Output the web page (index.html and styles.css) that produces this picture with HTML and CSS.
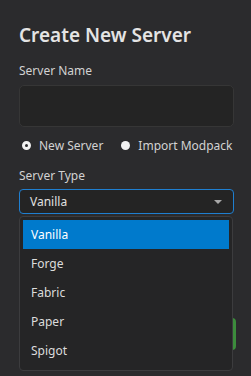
FILE: index.html
```html
<!DOCTYPE html>
<html lang="en">

<head>
  <meta charset="UTF-8" />
  <meta name="viewport" content="width=device-width, initial-scale=1.0" />
  <title>Create New Server</title>
  <link rel="stylesheet" href="styles.css">
</head>

<body>
  <div class="panel">
    <h1 class="titulo">Create New Server</h1>

    <label class="etiqueta" for="nombre">Server Name</label>
    <div class="campo" id="nombre"></div>

    <div class="radio-fila">
      <div class="radio-option">
        <span class="radio marcado"></span>
        <span>New Server</span>
      </div>
      <div class="radio-option">
        <span class="radio"></span>
        <span>Import Modpack</span>
      </div>
    </div>

    <div class="etiqueta corta">Server Type</div>
    <div class="selector-caja">
      <div class="selector">
        <span>Vanilla</span>
        <span class="flecha"></span>
      </div>
      <ul class="lista">
        <li class="activo">Vanilla</li>
        <li>Forge</li>
        <li>Fabric</li>
        <li>Paper</li>
        <li>Spigot</li>
      </ul>
    </div>

    <div class="acciones">
      <button class="boton-crear" type="button">Create</button>
    </div>
  </div>
</body>

</html>
```

FILE: styles.css
```css
html, body {
  margin: 0;
  height: 100%;
  background-color: #2b2b2d;
}

body {
  font-family: "Noto Sans", "Open Sans", sans-serif;
  color: #d6d6d6;
}

.panel {
  min-height: 376px;
  box-sizing: border-box;
  padding: 21px 17px 0 19px;
}

.titulo {
  margin: 0 0 14px 0;
  font-size: 19px;
  font-weight: 600;
  color: #e4e4e4;
  line-height: 28px;
}

.etiqueta {
  display: block;
  font-size: 12px;
  line-height: 16px;
  color: #d2d2d2;
  margin-bottom: 6px;
}

.etiqueta.corta {
  margin-bottom: 5px;
}

.campo {
  height: 40px;
  background-color: #242424;
  border: 1px solid #363636;
  border-radius: 5px;
}

.radio-fila {
  display: flex;
  gap: 18px;
  margin: 10px 0 14px 3px;
  font-size: 12px;
  color: #d2d2d2;
}

.radio-option {
  display: flex;
  align-items: center;
  gap: 8px;
}

.radio {
  width: 9px;
  height: 9px;
  border-radius: 50%;
  background-color: #f2f2f2;
  box-sizing: border-box;
}

.radio.marcado {
  border: 3px solid #f2f2f2;
  background-color: #2b2b2d;
}

.selector-caja {
  position: relative;
}

.selector {
  display: flex;
  align-items: center;
  justify-content: space-between;
  height: 23px;
  padding: 0 11px 0 10px;
  background-color: #242424;
  border: 1px solid #1f7fd0;
  border-radius: 4px;
  font-size: 12px;
  color: #e0e0e0;
}

.flecha {
  width: 0;
  height: 0;
  border-left: 4px solid transparent;
  border-right: 4px solid transparent;
  border-top: 4px solid #a8a8a8;
}

.lista {
  position: absolute;
  left: 0;
  right: 1px;
  top: 27px;
  margin: 0;
  padding: 3px 3px 5px 3px;
  list-style: none;
  background-color: #252526;
  border: 1px solid #3c3c3e;
  border-radius: 4px;
  z-index: 2;
}

.lista li {
  height: 29px;
  line-height: 29px;
  padding-left: 8px;
  font-size: 12px;
  color: #dcdcdc;
}

.lista li.activo {
  background-color: #007acc;
  color: #ffffff;
}

.acciones {
  display: flex;
  justify-content: flex-end;
  margin-top: 104px;
  margin-right: -2px;
}

.boton-crear {
  width: 80px;
  height: 32px;
  border: none;
  border-radius: 4px;
  background-color: #3c8c3c;
  color: #ffffff;
  font-family: inherit;
}
```
